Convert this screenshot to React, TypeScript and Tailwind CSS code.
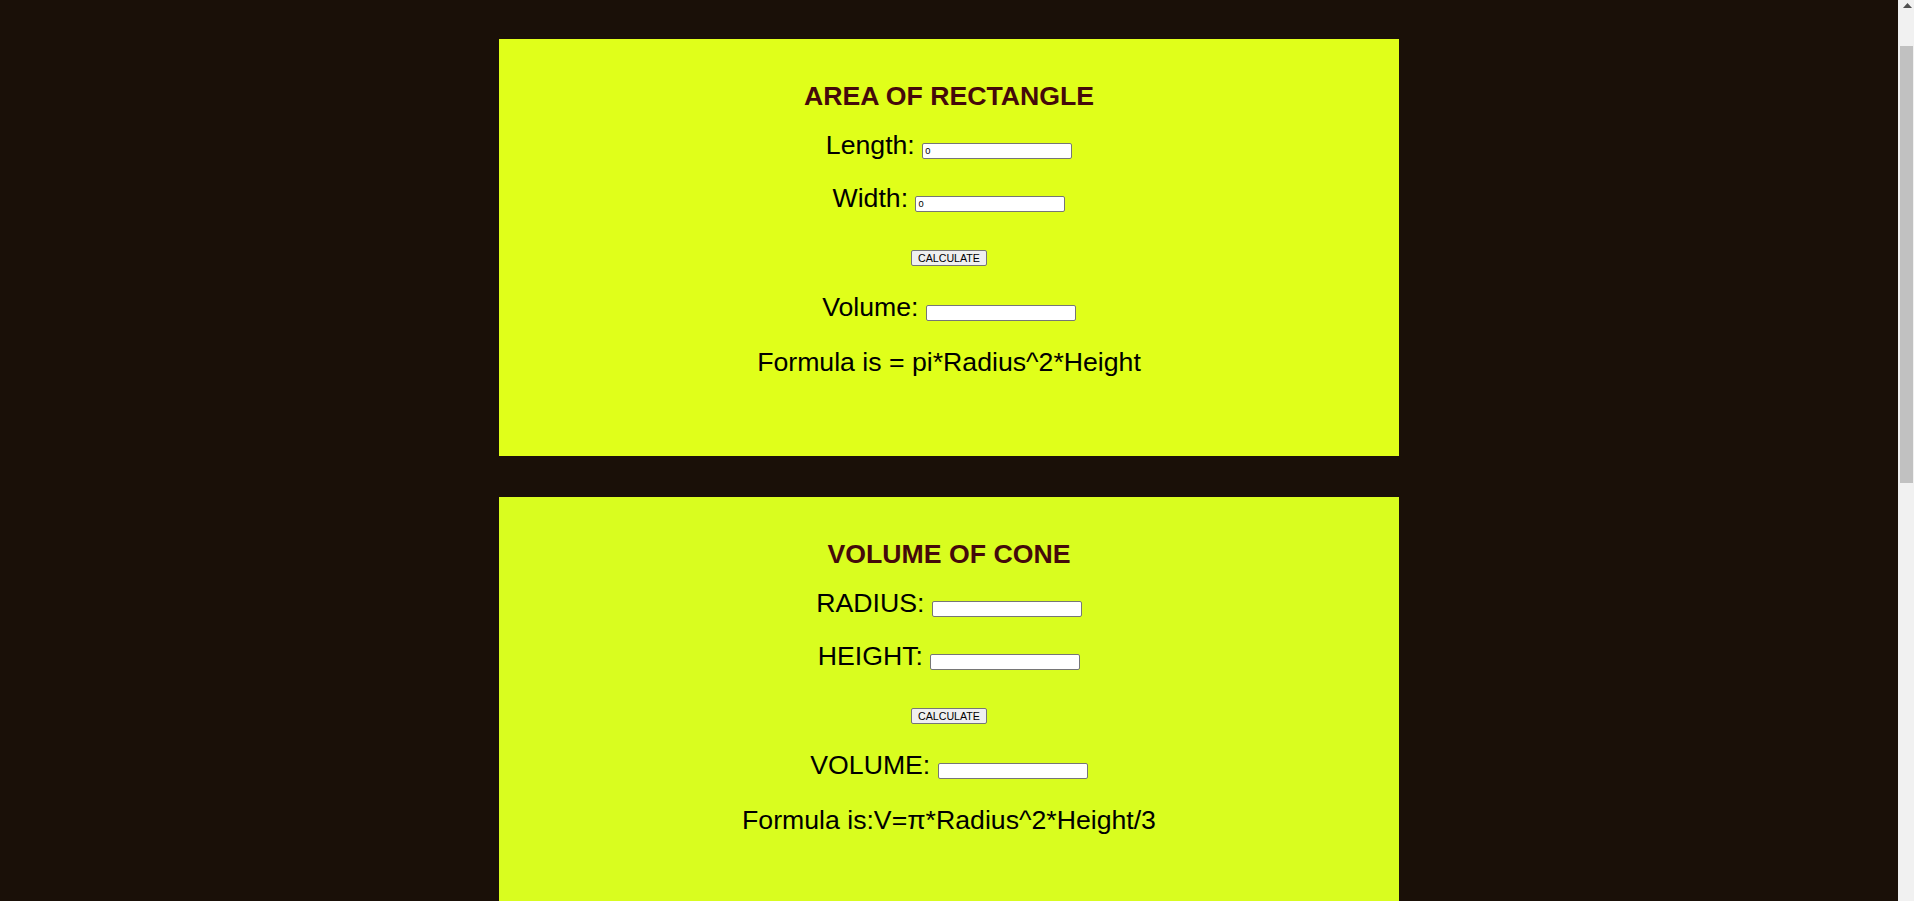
import { useState } from "react";

type Field = { label: string; initial: string };

type CalcCardProps = {
  title: string;
  fields: [Field, Field];
  resultLabel: string;
  formula: string;
  bg: string;
  compute: (a: number, b: number) => number;
};

const CalcCard = ({
  title,
  fields,
  resultLabel,
  formula,
  bg,
  compute,
}: CalcCardProps) => {
  const [a, setA] = useState(fields[0].initial);
  const [b, setB] = useState(fields[1].initial);
  const [result, setResult] = useState("");

  const inputCls =
    "inline-block h-[16px] w-[150px] rounded-[2px] border border-[#767676] bg-white px-[2px] py-0 align-baseline text-[9.33px] leading-[12px] text-black outline-none";

  return (
    <section
      className={`mx-auto w-[900px] shrink-0 pt-[42px] pb-[79px] text-center text-black ${bg}`}
    >
      <h2 className="text-[26.67px] leading-[30px] font-bold text-[#450a0a]">
        {title}
      </h2>
      <div className="mt-[19px] text-[26.67px] leading-[30px]">
        {fields[0].label}{" "}
        <input
          className={inputCls}
          value={a}
          onChange={(e) => setA(e.target.value)}
        />
      </div>
      <div className="mt-[23px] text-[26.67px] leading-[30px]">
        {fields[1].label}{" "}
        <input
          className={inputCls}
          value={b}
          onChange={(e) => setB(e.target.value)}
        />
      </div>
      <div className="mt-[37px] flex h-[16px] justify-center">
        <button
          className="h-[16px] rounded-[2px] border border-[#767676] bg-[#efefef] px-[6px] text-[10.67px] leading-[12px] text-black"
          onClick={() => setResult(String(compute(Number(a), Number(b))))}
        >
          CALCULATE
        </button>
      </div>
      <div className="mt-[26px] text-[26.67px] leading-[30px]">
        {resultLabel}{" "}
        <input className={inputCls} value={result} readOnly />
      </div>
      <p className="mt-[25px] text-[26.67px] leading-[30px]">{formula}</p>
    </section>
  );
};

// window scrollbar as it shows in the screenshot
const ScrollBar = () => (
  <div className="flex h-full w-[16px] shrink-0 flex-col bg-[#f1f1f1]">
    <div className="flex h-[17px] justify-center pt-[3px] pl-[2px]">
      <svg width="9" height="5" viewBox="0 0 9 5">
        <path d="M4.5 0 L9 5 L0 5 Z" fill="#505050" />
      </svg>
    </div>
    <div className="mt-[29px] ml-[2px] h-[437px] w-[13px] bg-[#c1c1c1]" />
  </div>
);

export default function App() {
  return (
    <div className="flex h-screen overflow-hidden bg-[#1a1008] font-['Liberation_Sans',Arial,sans-serif]">
      <main className="flex min-w-0 flex-1 flex-col gap-[41px] pt-[39px] pb-[41px]">
        <CalcCard
          title="AREA OF RECTANGLE"
          fields={[
            { label: "Length:", initial: "0" },
            { label: "Width:", initial: "0" },
          ]}
          resultLabel="Volume:"
          formula="Formula is = pi*Radius^2*Height"
          bg="bg-[#e0ff1a]"
          compute={(l, w) => l * w}
        />
        <CalcCard
          title="VOLUME OF CONE"
          fields={[
            { label: "RADIUS:", initial: "" },
            { label: "HEIGHT:", initial: "" },
          ]}
          resultLabel="VOLUME:"
          formula="Formula is:V=π*Radius^2*Height/3"
          bg="bg-[#d9fd1f]"
          compute={(r, h) => (Math.PI * r * r * h) / 3}
        />
      </main>
      <ScrollBar />
    </div>
  );
}
